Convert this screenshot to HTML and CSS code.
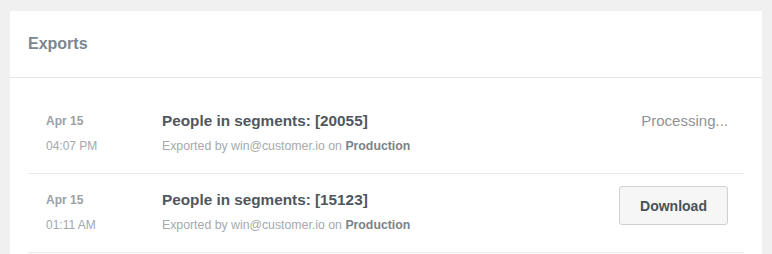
FILE: index.html
```html
<!DOCTYPE html>
<html lang="en">
<head>
  <meta charset="UTF-8">
  <title>Exports</title>
  <link rel="stylesheet" href="styles.css">
</head>
<body>
  <div class="card">
    <div class="card-header">Exports</div>
    <ul class="export-list">
      <li class="export-row">
        <div class="export-date">
          <span class="day">Apr 15</span>
          <span class="time">04:07 PM</span>
        </div>
        <div class="export-info">
          <span class="export-title">People in segments: [20055]</span>
          <span class="export-meta">Exported by win@customer.io on <b>Production</b></span>
        </div>
        <div class="export-action">
          <span class="status">Processing...</span>
        </div>
      </li>
      <li class="export-row">
        <div class="export-date">
          <span class="day">Apr 15</span>
          <span class="time">01:11 AM</span>
        </div>
        <div class="export-info">
          <span class="export-title">People in segments: [15123]</span>
          <span class="export-meta">Exported by win@customer.io on <b>Production</b></span>
        </div>
        <div class="export-action">
          <button class="btn">Download</button>
        </div>
      </li>
    </ul>
  </div>
</body>
</html>
```

FILE: styles.css
```css
body {
  margin: 0;
  padding: 11px 10px 0;
  background: #f0f0f0;
  font-family: "Liberation Sans", Arial, sans-serif;
  overflow: hidden;
}

.card {
  background: #fff;
  height: 243px;
  overflow: hidden;
}

.card-header {
  height: 67px;
  box-sizing: border-box;
  padding: 24px 18px 0;
  font-size: 16px;
  font-weight: bold;
  color: #7b8790;
  border-bottom: 1px solid #e3e5e6;
}

.export-list {
  list-style: none;
  margin: 0;
  padding: 17px 18px 0;
}

.export-row {
  display: flex;
  align-items: flex-start;
  height: 79px;
  box-sizing: border-box;
  padding-top: 17px;
  border-bottom: 1px solid #e8e9ea;
}

.export-date {
  display: flex;
  flex-direction: column;
  gap: 11px;
  width: 116px;
  padding: 2px 0 0 18px;
}

.day {
  font-size: 12px;
  font-weight: bold;
  color: #9ba1a6;
}

.time {
  font-size: 12px;
  color: #a3a7ab;
}

.export-info {
  flex: 1;
  display: flex;
  flex-direction: column;
  gap: 9px;
}

.export-title {
  font-size: 15.3px;
  font-weight: bold;
  color: #50575e;
}

.export-meta {
  font-size: 12.3px;
  color: #a5aaae;
}

.export-meta b {
  color: #7b8288;
}

.export-action {
  padding-right: 16px;
}

.status {
  display: block;
  font-size: 15px;
  color: #8c9399;
}

.btn {
  display: block;
  width: 109px;
  height: 39px;
  margin-top: -5px;
  background: #f6f6f6;
  border: 1px solid #cfd1d3;
  border-radius: 3px;
  font-family: inherit;
  font-size: 14px;
  font-weight: bold;
  color: #4a5157;
}
```
